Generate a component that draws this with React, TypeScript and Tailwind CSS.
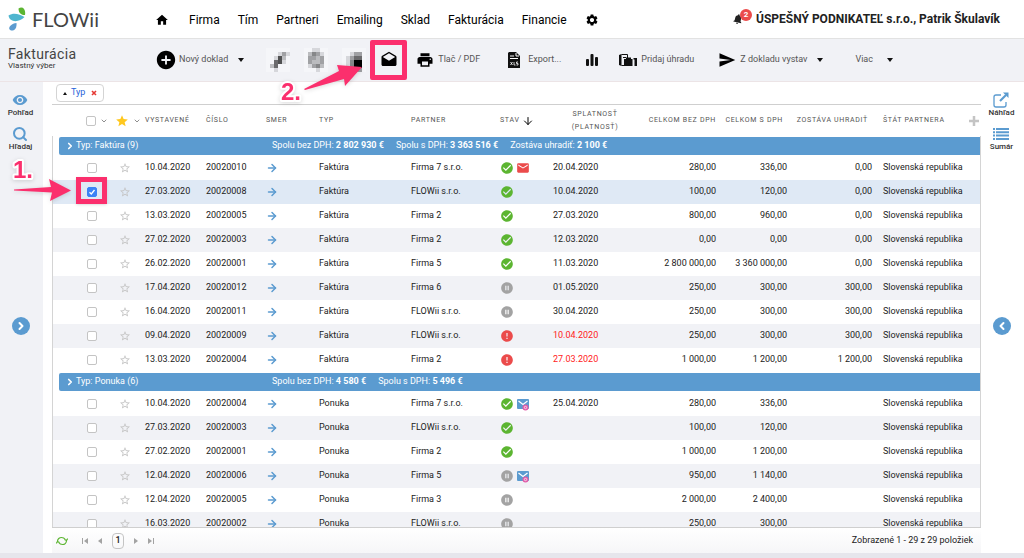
import { useState } from "react";
import {
	MdAddCircle,
	MdCheckCircle,
	MdDrafts,
	MdError,
	MdHome,
	MdMail,
	MdNotifications,
	MdPauseCircleFilled,
	MdPrint,
	MdSend,
	MdSettings,
	MdStar,
	MdStarBorder,
	MdVisibility,
} from "react-icons/md";
import {
	ArrowDown,
	ArrowRight,
	ChevronDown,
	ChevronLeft,
	ChevronRight,
	Search,
} from "lucide-react";

type Status = "ok" | "wait" | "error";

type Row = {
	date: string;
	number: string;
	partner: string;
	status: Status;
	mail?: "red" | "blue";
	due?: string;
	net: string;
	gross: string;
	left?: string;
};

type Group = {
	type: string;
	count: number;
	sums: { label: string; value: string }[];
	rows: Row[];
};

const menu = ["Firma", "Tím", "Partneri", "Emailing", "Sklad", "Fakturácia", "Financie"];

const groups: Group[] = [
	{
		type: "Faktúra",
		count: 9,
		sums: [
			{ label: "Spolu bez DPH:", value: "2 802 930 €" },
			{ label: "Spolu s DPH:", value: "3 363 516 €" },
			{ label: "Zostáva uhradiť:", value: "2 100 €" },
		],
		rows: [
			{ date: "10.04.2020", number: "20020010", partner: "Firma 7 s.r.o.", status: "ok", mail: "red", due: "20.04.2020", net: "280,00", gross: "336,00", left: "0,00" },
			{ date: "27.03.2020", number: "20020008", partner: "FLOWii s.r.o.", status: "ok", due: "10.04.2020", net: "100,00", gross: "120,00", left: "0,00" },
			{ date: "13.03.2020", number: "20020005", partner: "Firma 2", status: "ok", due: "27.03.2020", net: "800,00", gross: "960,00", left: "0,00" },
			{ date: "27.02.2020", number: "20020003", partner: "Firma 2", status: "ok", due: "12.03.2020", net: "0,00", gross: "0,00", left: "0,00" },
			{ date: "26.02.2020", number: "20020001", partner: "Firma 5", status: "ok", due: "11.03.2020", net: "2 800 000,00", gross: "3 360 000,00", left: "0,00" },
			{ date: "17.04.2020", number: "20020012", partner: "Firma 6", status: "wait", due: "01.05.2020", net: "250,00", gross: "300,00", left: "300,00" },
			{ date: "16.04.2020", number: "20020011", partner: "FLOWii s.r.o.", status: "wait", due: "30.04.2020", net: "250,00", gross: "300,00", left: "300,00" },
			{ date: "09.04.2020", number: "20020009", partner: "FLOWii s.r.o.", status: "error", due: "10.04.2020", net: "250,00", gross: "300,00", left: "300,00" },
			{ date: "13.03.2020", number: "20020004", partner: "Firma 2", status: "error", due: "27.03.2020", net: "1 000,00", gross: "1 200,00", left: "1 200,00" },
		],
	},
	{
		type: "Ponuka",
		count: 6,
		sums: [
			{ label: "Spolu bez DPH:", value: "4 580 €" },
			{ label: "Spolu s DPH:", value: "5 496 €" },
		],
		rows: [
			{ date: "10.04.2020", number: "20020004", partner: "Firma 7 s.r.o.", status: "ok", mail: "blue", due: "25.04.2020", net: "280,00", gross: "336,00" },
			{ date: "27.03.2020", number: "20020003", partner: "FLOWii s.r.o.", status: "ok", net: "100,00", gross: "120,00" },
			{ date: "27.02.2020", number: "20020001", partner: "Firma 2", status: "ok", net: "1 000,00", gross: "1 200,00" },
			{ date: "12.04.2020", number: "20020006", partner: "Firma 5", status: "wait", mail: "blue", net: "950,00", gross: "1 140,00" },
			{ date: "12.04.2020", number: "20020005", partner: "Firma 3", status: "wait", net: "2 000,00", gross: "2 400,00" },
			{ date: "16.03.2020", number: "20020002", partner: "FLOWii s.r.o.", status: "wait", net: "250,00", gross: "300,00" },
		],
	},
];

// grey levels of the obscured toolbar icons, one digit per tile, 9 = black
const mosaics = [
	["000000", "000131", "001620", "005610", "025000", "001000"],
	["001100", "024310", "033230", "032230", "013420", "000100"],
	["000000", "001330", "013550", "014990", "014990", "001330"],
];

function Mosaic({ tiles }: { tiles: string[] }) {
	return (
		<svg className="size-6" viewBox="0 0 24 24" shapeRendering="crispEdges" aria-hidden="true">
			{tiles.map((line, y) =>
				line.split("").map((level, x) => (
					<rect
						key={`${x}-${y}`}
						x={x * 4}
						y={y * 4}
						width="4"
						height="4"
						fill={level === "0" ? "#ffffff" : "#000000"}
						fillOpacity={level === "0" ? 0.3 : Number(level) / 9}
					/>
				)),
			)}
		</svg>
	);
}

function Logo() {
	return (
		<a href="#" className="flex items-center gap-1" aria-label="FLOWii">
			<svg className="h-6 w-5" viewBox="0 0 20 24" aria-hidden="true">
				<path d="M10.500 1.500c4-2.500 7.500.5 6.500 6.500-3.500.5-6.500-2-6.500-6.500z" fill="#5cb531" />
				<path d="M.5 8.500c5-3.500 11-1.500 16 1.500-5 5.500-15 6-16-1.500z" fill="#4fb6cf" />
				<path d="M8.500 16c.5 6-2.500 8-5.500 7.500-3.500-1-2-6.500 5.500-7.500z" fill="#5b9bd0" />
			</svg>
			<span className="font-[Lato] text-xl leading-6 text-[#444]">FLOWii</span>
		</a>
	);
}

function Caret() {
	return (
		<svg className="h-1 w-1.5" viewBox="0 0 6 4" aria-hidden="true">
			<path d="M0 0h6L3 4z" fill="#111" />
		</svg>
	);
}

function Tick({ label, checked, onChange }: { label: string; checked: boolean; onChange: () => void }) {
	return (
		<span className="grid size-2.5 shrink-0">
			<input
				type="checkbox"
				aria-label={label}
				checked={checked}
				onChange={onChange}
				className="col-start-1 row-start-1 size-2.5 appearance-none rounded-xs border border-[#c4c4c4] bg-white checked:border-[#3b82f6] checked:bg-[#3b82f6]"
			/>
			{checked && (
				<svg className="pointer-events-none col-start-1 row-start-1 size-2.5" viewBox="0 0 10 10" fill="none" aria-hidden="true">
					<path d="M2.500 5.200l1.800 1.800 3.200-4" stroke="#fff" strokeWidth="1.300" />
				</svg>
			)}
		</span>
	);
}

function StatusIcon({ status }: { status: Status }) {
	if (status === "ok") return <MdCheckCircle className="size-3.5 text-[#5cb531]" />;
	if (status === "error") return <MdError className="size-3.5 text-[#eb4b4b]" />;
	return <MdPauseCircleFilled className="size-3.5 text-[#a3a3a3]" />;
}

function MailIcon({ color }: { color: "red" | "blue" }) {
	if (color === "red") return <MdMail className="size-3.5 text-[#eb4b4b]" />;
	return (
		<svg className="size-3.5" viewBox="0 0 14 14" aria-hidden="true">
			<rect x="1" y="2" width="12" height="10" rx="1" fill="#5b9bd0" />
			<path d="M2.500 4L7 7.500 11.500 4" fill="none" stroke="#fff" strokeWidth="1.200" />
			<circle cx="9.500" cy="10.500" r="3" fill="#e05aa8" />
			<circle cx="9.500" cy="10.500" r="1.200" fill="none" stroke="#fff" strokeWidth=".7" />
		</svg>
	);
}

export default function App() {
	const [selected, setSelected] = useState<string[]>(["Faktúra-20020008"]);

	const toggle = (key: string) => {
		setSelected((list) => (list.includes(key) ? list.filter((k) => k !== key) : [...list, key]));
	};

	return (
		<div className="relative flex h-screen flex-col overflow-hidden bg-white font-[Roboto,sans-serif] text-[#222]">
			{/* Main menu */}
			<header className="flex h-[39px] shrink-0 items-center border-b border-[#e2e2e2] pr-6 pl-2">
				<div className="w-[147px]">
					<Logo />
				</div>
				<nav className="flex items-center gap-[18px] pt-0.5 text-xs text-black">
					<a href="#" aria-label="Domov" className="mr-0.5">
						<MdHome className="size-3.5" />
					</a>
					{menu.map((item) => (
						<a key={item} href="#">
							{item}
						</a>
					))}
					<a href="#" aria-label="Nastavenia">
						<MdSettings className="size-3.5" />
					</a>
				</nav>
				<div className="ml-auto flex items-center gap-1">
					<button type="button" aria-label="Upozornenia" className="relative pr-2">
						<MdNotifications className="size-3 rotate-12" />
						<span className="absolute -top-1 right-0 flex size-3 items-center justify-center rounded-full bg-[#eb4b4b] text-[8px] font-bold text-white">
							2
						</span>
					</button>
					<a href="#" className="text-xs font-bold">
						ÚSPEŠNÝ PODNIKATEĽ s.r.o., Patrik Škulavík
					</a>
				</div>
			</header>

			{/* Toolbar */}
			<div className="flex h-[43px] shrink-0 items-center border-b border-[#ece4e6] bg-[#f1f2f6] pl-2 text-[9px] text-[#555]">
				<div className="w-[147px] pb-1">
					<h1 className="text-sm leading-4 tracking-wide text-[#444]">Fakturácia</h1>
					<p className="text-[8px] leading-2 text-[#333]">Vlastný výber</p>
				</div>
				<button type="button" className="mr-[22px] flex items-center gap-0.5">
					<MdAddCircle className="size-[22px] text-black" />
					<span className="mr-2">Nový doklad</span>
					<Caret />
				</button>
				<div className="flex items-center gap-3.5">
					{mosaics.map((tiles, i) => (
						<Mosaic key={i} tiles={tiles} />
					))}
				</div>
				<button type="button" aria-label="Odoslať emailom" className="ml-3.5 size-[18px]">
					<MdDrafts className="size-[18px] text-black" />
				</button>
				<button type="button" className="ml-[18px] flex items-center gap-1">
					<MdPrint className="size-[18px] text-black" />
					Tlač / PDF
				</button>
				<button type="button" className="ml-7 flex items-center gap-2">
					<svg className="h-4 w-3" viewBox="0 0 12 16" aria-hidden="true">
						<path d="M1 0h7l4 4v12H0V1z" fill="#111" />
						<path d="M8 1v3h3M2 4h4M2 6.500h8" stroke="#fff" fill="none" />
						<path d="M2.500 10l2 3m0-3l-2 3M6 10v3h1.500M10 10H8.500v1.500H10V13H8.500" stroke="#fff" strokeWidth=".8" fill="none" />
					</svg>
					Export...
				</button>
				<button type="button" aria-label="Grafy" className="ml-6">
					<svg className="h-3.5 w-3.5" viewBox="0 0 14 14" aria-hidden="true">
						<rect x="1" y="6" width="3" height="7" rx="1" fill="#111" />
						<rect x="5.500" y="1" width="3" height="12" rx="1" fill="#111" />
						<rect x="10" y="4" width="3" height="9" rx="1" fill="#111" />
					</svg>
				</button>
				<button type="button" className="ml-5 flex items-center gap-1">
					<svg className="h-3.5 w-[18px]" viewBox="0 0 18 14" aria-hidden="true">
						<path d="M0 2l2.500-1v12L0 12z" fill="#111" />
						<path d="M2.500 1.500H8.500V5M2.500 12.500H6M4 4.500h3" stroke="#111" fill="none" />
						<path d="M5 6h2V4.500h5V6h1.500v7H5z" fill="#111" />
						<path d="M14.500 5H18v8h-2.500V6.500h-1z" fill="#111" />
					</svg>
					Pridaj úhradu
				</button>
				<button type="button" className="ml-6 flex items-center gap-1">
					<MdSend className="size-[18px] text-black" />
					<span className="mr-1.5">Z dokladu vystav</span>
					<Caret />
				</button>
				<button type="button" className="ml-8 flex items-center gap-3.5">
					Viac
					<Caret />
				</button>
			</div>

			<div className="flex min-h-0 flex-1">
				{/* Left panel */}
				<aside className="grid w-[43px] shrink-0 grid-rows-[1fr_auto_1fr] justify-items-center bg-[#f1f2f6] pt-2.5 pr-0.5 text-[8px] leading-[10px] font-medium text-[#333]">
					<div className="flex flex-col gap-2">
						<button type="button" className="flex flex-col items-center">
							<MdVisibility className="size-4 text-[#5b9bd0]" />
							Pohľad
						</button>
						<button type="button" className="flex flex-col items-center">
							<Search className="size-4 text-[#5b9bd0]" strokeWidth={3} />
							Hľadaj
						</button>
					</div>
					<button type="button" aria-label="Rozbaliť ľavý panel" className="mt-1.5 flex size-[18px] items-center justify-center rounded-full bg-[#5b9bd0] text-white">
						<ChevronRight className="size-3" strokeWidth={4} />
					</button>
				</aside>

				<main className="flex min-w-0 flex-1 flex-col pl-[9px]">
					<div className="flex h-[22px] shrink-0 items-center pl-1">
						<div className="flex h-[18px] items-center gap-1.5 rounded-sm border border-[#d4d4d4] px-1.5">
							<button type="button" className="flex items-center gap-1 text-[9px] text-[#2563d9]">
								<svg className="h-[3px] w-1" viewBox="0 0 4 3" aria-hidden="true">
									<path d="M0 3h4L2 0z" fill="#111" />
								</svg>
								Typ
							</button>
							<button type="button" aria-label="Zrušiť zoskupenie">
								<svg className="size-1.5" viewBox="0 0 6 6" aria-hidden="true">
									<path d="M1 1l4 4M5 1L1 5" stroke="#e53935" strokeWidth="1.600" />
								</svg>
							</button>
						</div>
					</div>

					<div className="min-h-0 flex-1 overflow-hidden border-y border-[#cfcfcf]">
						<table className="w-full table-fixed border-separate border-spacing-0 text-left text-[9px]">
							<colgroup>
								<col className="w-[61px]" />
								<col className="w-8" />
								<col className="w-[61px]" />
								<col className="w-[60px]" />
								<col className="w-[53px]" />
								<col className="w-[92px]" />
								<col className="w-[89px]" />
								<col className="w-[53px]" />
								<col className="w-[84px]" />
								<col className="w-[79px]" />
								<col className="w-[71px]" />
								<col className="w-[85px]" />
								<col />
							</colgroup>
							<thead className="text-[7px] leading-[13px] tracking-widest whitespace-nowrap text-[#555]">
								<tr className="h-[31px] *:p-0 *:font-normal">
									<th>
										<span className="flex items-center gap-1 pl-[34px]">
											<Tick label="Vybrať všetko" checked={false} onChange={() => setSelected([])} />
											<ChevronDown className="size-2" />
										</span>
									</th>
									<th>
										<span className="flex items-center gap-1 pl-0.5">
											<MdStar className="size-3.5 text-[#ffc81f]" />
											<ChevronDown className="size-2" />
										</span>
									</th>
									<th>VYSTAVENÉ</th>
									<th>ČÍSLO</th>
									<th>SMER</th>
									<th>TYP</th>
									<th>PARTNER</th>
									<th>
										<span className="flex items-center gap-0.5">
											STAV
											<ArrowDown className="size-3 text-black" />
										</span>
									</th>
									<th className="text-center">
										SPLATNOSŤ
										<br />
										(PLATNOSŤ)
									</th>
									<th className="text-right">CELKOM BEZ DPH</th>
									<th>
										<span className="flex justify-end pr-1">CELKOM S DPH</span>
									</th>
									<th>
										<span className="flex justify-end pr-1">ZOSTÁVA UHRADIŤ</span>
									</th>
									<th>
										<span className="flex items-center justify-between pr-0.5 pl-[11px]">
											ŠTÁT PARTNERA
											<svg className="size-2.5" viewBox="0 0 10 10" aria-hidden="true">
												<path d="M5 0v10M0 5h10" stroke="#c4c4c4" strokeWidth="2.500" />
											</svg>
										</span>
									</th>
								</tr>
							</thead>
							{groups.map((group) => (
								<tbody key={group.type}>
									<tr>
										<td colSpan={13} className="h-5 border-x border-[#d4d4d4] p-0">
											<div className="ml-1.5 flex h-[18px] items-center rounded-l-xs bg-[#5b9bd0] pl-1.5 text-white">
												<div className="flex w-[207px] items-center gap-px">
													<ChevronRight className="size-2.5" strokeWidth={4} />
													<span>
														Typ: {group.type} ({group.count})
													</span>
												</div>
												<div className="flex gap-3">
													{group.sums.map((sum) => (
														<span key={sum.label}>
															{sum.label} <b>{sum.value}</b>
														</span>
													))}
												</div>
											</div>
										</td>
									</tr>
									{group.rows.map((row, i) => {
										const key = `${group.type}-${row.number}`;
										const isSelected = selected.includes(key);
										return (
											<tr
												key={key}
												className={`h-6 *:border-[#d4d4d4] *:p-0 *:first:border-l *:last:border-r ${isSelected ? "bg-[#dfe9f5]" : i % 2 ? "bg-[#f1f2f6]" : "bg-white"}`}
											>
												<td>
													<div className="pl-[34px]">
														<Tick label={`Vybrať ${row.number}`} checked={isSelected} onChange={() => toggle(key)} />
													</div>
												</td>
												<td>
													<MdStarBorder className="ml-1.5 size-3 text-[#c4c4c4]" />
												</td>
												<td>{row.date}</td>
												<td>{row.number}</td>
												<td>
													<ArrowRight className="size-3 text-[#5b9bd0]" strokeWidth={3} />
												</td>
												<td>{group.type}</td>
												<td>{row.partner}</td>
												<td>
													<div className="flex items-center gap-0.5">
														<StatusIcon status={row.status} />
														{row.mail && <MailIcon color={row.mail} />}
													</div>
												</td>
												<td className={row.status === "error" ? "text-[#ff1a1a]" : ""}>{row.due}</td>
												<td className="text-right">{row.net}</td>
												<td className="text-right">{row.gross}</td>
												<td className="text-right">{row.left}</td>
												<td>
													<span className="pl-[11px]">Slovenská republika</span>
												</td>
											</tr>
										);
									})}
								</tbody>
							))}
						</table>
					</div>

					{/* Paging */}
					<footer className="flex h-[25px] shrink-0 items-center justify-between bg-linear-to-b from-white to-[#f6f6f8] pr-2 pl-1 text-[9px]">
						<div className="flex items-center gap-2.5 text-[#a3a3a3]">
							<button type="button" aria-label="Obnoviť" className="mr-1">
								<svg className="size-3" viewBox="0 0 12 12" fill="none" stroke="#5cb531" strokeWidth="1.200" aria-hidden="true">
									<path d="M1.500 6.500C1.500 4 3.500 2.500 5.500 2.500c2 0 3 .8 3.800 2M10.500 5.500C10.500 8 8.500 9.500 6.500 9.500c-2 0-3-.8-3.800-2" />
									<path d="M11.700 3.500l-1.200 2-2-1M.3 8.500l1.200-2 2 1" />
								</svg>
							</button>
							<button type="button" aria-label="Prvá strana">
								<svg className="h-1.5 w-1.5" viewBox="0 0 6 6" fill="currentColor" aria-hidden="true">
									<path d="M0 0h1v6H0zM6 0v6L2 3z" />
								</svg>
							</button>
							<button type="button" aria-label="Predošlá strana">
								<svg className="h-1.5 w-1" viewBox="0 0 4 6" fill="currentColor" aria-hidden="true">
									<path d="M4 0v6L0 3z" />
								</svg>
							</button>
							<button type="button" className="h-4 w-3 rounded-sm border border-[#c4c4c4] font-medium text-[#222]">
								1
							</button>
							<button type="button" aria-label="Ďalšia strana">
								<svg className="h-1.5 w-1" viewBox="0 0 4 6" fill="currentColor" aria-hidden="true">
									<path d="M0 0v6l4-3z" />
								</svg>
							</button>
							<button type="button" aria-label="Posledná strana">
								<svg className="h-1.5 w-1.5" viewBox="0 0 6 6" fill="currentColor" aria-hidden="true">
									<path d="M5 0h1v6H5zM0 0v6l4-3z" />
								</svg>
							</button>
						</div>
						<p>Zobrazené 1 - 29 z 29 položiek</p>
					</footer>
				</main>

				{/* Right panel */}
				<aside className="grid w-[43px] shrink-0 grid-rows-[1fr_auto_1fr] justify-items-center pt-2.5 pr-0.5 text-[8px] leading-[10px] font-medium text-[#333]">
					<div className="flex flex-col gap-2">
						<button type="button" className="flex flex-col items-center">
							<svg className="size-4" viewBox="0 0 16 16" fill="none" aria-hidden="true">
								<path d="M8 3H3a2 2 0 0 0-2 2v8a2 2 0 0 0 2 2h8a2 2 0 0 0 2-2v-3" stroke="#5b9bd0" strokeWidth="1.300" />
								<path d="M7 9l6-6" stroke="#5b9bd0" strokeWidth="2.200" />
								<path d="M10 .5h5.500V6z" fill="#5b9bd0" />
							</svg>
							Náhľad
						</button>
						<button type="button" className="flex flex-col items-center">
							<svg className="size-4" viewBox="0 0 16 16" aria-hidden="true">
								<path d="M0 2h2v2H0zM3 2h13v2H3zM0 5.300h2v2H0zM3 5.300h13v2H3zM0 8.600h2v2H0zM3 8.600h13v2H3zM0 12h2v2H0zM3 12h13v2H3z" fill="#5b9bd0" />
							</svg>
							Sumár
						</button>
					</div>
					<button type="button" aria-label="Rozbaliť pravý panel" className="mt-1.5 flex size-[18px] items-center justify-center rounded-full bg-[#5b9bd0] text-white">
						<ChevronLeft className="size-3" strokeWidth={4} />
					</button>
				</aside>
			</div>
			<div className="h-[5px] shrink-0 bg-[#e6e6ec]" />

			{/* Step marks over the page */}
			<div className="pointer-events-none absolute top-[177px] left-[76px] h-[27px] w-[31px] border-[5px] border-[#fb2f6d] shadow-sm" />
			<div className="pointer-events-none absolute top-10 left-[370px] h-10 w-[37px] rounded-xs border-[5px] border-[#fb2f6d]" />
			<svg className="pointer-events-none absolute top-0 left-0 h-[210px] w-[370px] drop-shadow-sm" viewBox="0 0 370 210" aria-hidden="true">
				<path d="M14 189.500L51 187l-2-8 22 11.500L50 201l2-8.500L14 190.500z" fill="#fb2f6d" />
				<path d="M304 89l35-18-2-6 25 2-17 19-1-7-39 11z" fill="#fb2f6d" />
				<g fill="#fb2f6d" stroke="#fff" strokeWidth="4" strokeLinejoin="round" paintOrder="stroke" fontFamily="Liberation Sans, sans-serif" fontWeight="bold" fontSize="24">
					<text x="13" y="178">1.</text>
					<text x="281" y="100">2.</text>
				</g>
			</svg>
		</div>
	);
}
